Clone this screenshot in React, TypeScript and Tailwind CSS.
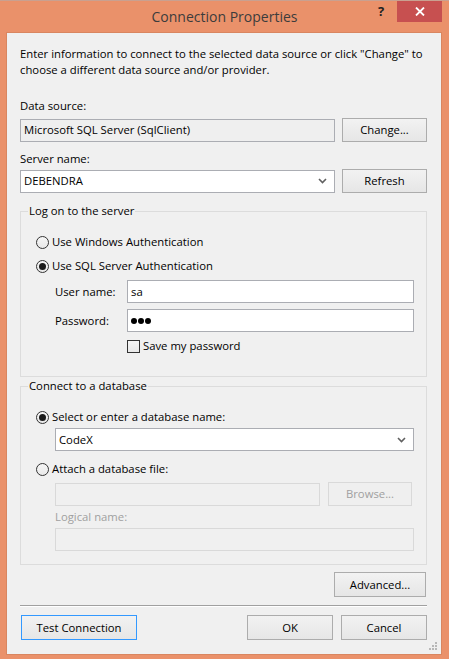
import React from "react";

const font = { fontFamily: '"Open Sans", "Noto Sans", sans-serif' };

function Chevron() {
  return (
    <svg width="9" height="6" viewBox="0 0 9 6" className="shrink-0">
      <path d="M1 1 L4.5 4.5 L8 1" fill="none" stroke="#606060" strokeWidth="1.6" />
    </svg>
  );
}

function Button({ label, className = "", disabled = false, focused = false }: { label: string; className?: string; disabled?: boolean; focused?: boolean }) {
  return (
    <div
      className={`flex items-center justify-center border ${
        focused
          ? "border-[#3399ff] bg-gradient-to-b from-[#f2f2f2] to-[#e6e6e6] text-[#000]"
          : disabled
          ? "border-[#d9d9d9] bg-[#efefef] text-[#a0a0a0]"
          : "border-[#acacac] bg-gradient-to-b from-[#f2f2f2] to-[#e6e6e6] text-[#000]"
      } ${className}`}
    >
      {label}
    </div>
  );
}

function Radio({ checked, label }: { checked?: boolean; label: string }) {
  return (
    <div className="flex items-center h-4">
      <div className="w-[13px] h-[13px] rounded-full border border-[#333] bg-gradient-to-b from-[#f6f6f6] to-[#e9e9e9] flex items-center justify-center">
        {checked && <div className="w-[7px] h-[7px] rounded-full bg-[#1a1a1a]" />}
      </div>
      <span className="ml-[3px] text-[#000]">{label}</span>
    </div>
  );
}

function Combo({ value, className = "" }: { value: string; className?: string }) {
  return (
    <div className={`flex items-center h-[23px] bg-white border border-[#abadb3] pl-[3px] pr-[7px] ${className}`}>
      <span className="flex-1 text-[#000]">{value}</span>
      <Chevron />
    </div>
  );
}

function Group({ title, children, className = "" }: { title: string; children: React.ReactNode; className?: string }) {
  return (
    <fieldset className={`border border-[#dcdcdc] mx-0 p-0 ${className}`}>
      <legend className="ml-[7px] px-[1px] leading-4 text-[#000]">{title}</legend>
      <div className="pl-[15px] pr-[12px]">{children}</div>
    </fieldset>
  );
}

export default function App() {
  return (
    <div className="w-[449px] h-[659px] bg-[#ea916a] flex flex-col border-t border-[#c9a090]" style={font}>
      {/* Title bar */}
      <div className="relative h-[31px] shrink-0 flex items-center justify-center">
        <span className="text-[14px] text-[#3c3c3c] -mt-[1px]">Connection Properties</span>
        <span className="absolute left-[378px] top-[1px] text-[13px] font-bold text-[#222]">?</span>
        <div className="absolute left-[397px] top-0 w-[45px] h-[21px] bg-[#c75050] flex items-center justify-center">
          <svg width="10" height="9" viewBox="0 0 10 9">
            <path d="M1 0.5 L9 8.5 M9 0.5 L1 8.5" stroke="#fff" strokeWidth="1.8" />
          </svg>
        </div>
      </div>

      {/* Client area */}
      <div className="relative ml-[6px] w-[436px] h-[623px] bg-[#f0f0f0] border border-[#d98660] pl-[13px] pr-[14px] flex flex-col text-[11.3px] leading-4 text-[#000]">
        <p className="mt-[13px] -mr-[4px]">
          Enter information to connect to the selected data source or click "Change" to choose a different data source and/or provider.
        </p>

        <div className="mt-[20px]">Data source:</div>
        <div className="mt-[4px] flex items-center gap-[7px]">
          <div className="flex-1 h-[23px] flex items-center border border-[#abadb3] bg-[#efefef] px-[3px]">Microsoft SQL Server (SqlClient)</div>
          <Button label="Change..." className="w-[85px] h-[24px]" />
        </div>

        <div className="mt-[9px]">Server name:</div>
        <div className="mt-[2px] flex items-center gap-[7px]">
          <Combo value="DEBENDRA" className="flex-1" />
          <Button label="Refresh" className="w-[85px] h-[24px]" />
        </div>

        <Group title="Log on to the server" className="mt-[10px] h-[174px]">
          <div className="mt-[15px]">
            <Radio label="Use Windows Authentication" />
          </div>
          <div className="mt-[8px]">
            <Radio checked label="Use SQL Server Authentication" />
          </div>
          <div className="mt-[6px] flex items-center pl-[19px]">
            <span className="w-[72px]">User name:</span>
            <div className="flex-1 h-[23px] bg-white border border-[#abadb3] flex items-center px-[3px]">sa</div>
          </div>
          <div className="mt-[6px] flex items-center pl-[19px]">
            <span className="w-[72px]">Password:</span>
            <div className="flex-1 h-[23px] bg-white border border-[#abadb3] flex items-center px-[3px] gap-[1px]">
              <span className="w-[6px] h-[6px] rounded-full bg-black" />
              <span className="w-[6px] h-[6px] rounded-full bg-black" />
              <span className="w-[6px] h-[6px] rounded-full bg-black" />
            </div>
          </div>
          <div className="mt-[6px] flex items-center pl-[91px] h-4">
            <div className="w-[13px] h-[13px] border border-[#333] bg-gradient-to-b from-[#f6f6f6] to-[#e9e9e9]" />
            <span className="ml-[3px]">Save my password</span>
          </div>
        </Group>

        <Group title="Connect to a database" className="mt-[1px] h-[187px]">
          <div className="mt-[15px]">
            <Radio checked label="Select or enter a database name:" />
          </div>
          <Combo value="CodeX" className="mt-[3px] ml-[19px]" />
          <div className="mt-[10px]">
            <Radio label="Attach a database file:" />
          </div>
          <div className="mt-[5px] ml-[19px] flex items-center gap-[8px] pr-[2px]">
            <div className="flex-1 h-[23px] border border-[#d9d9d9] bg-[#f0f0f0]" />
            <Button label="Browse..." disabled className="w-[84px] h-[24px]" />
          </div>
          <div className="mt-[3px] ml-[19px] text-[#a0a0a0]">Logical name:</div>
          <div className="mt-[3px] ml-[19px] h-[23px] border border-[#d9d9d9] bg-[#f0f0f0]" />
        </Group>

        <div className="mt-[7px] flex justify-end pr-[1px]">
          <Button label="Advanced..." className="w-[92px] h-[25px]" />
        </div>

        <div className="mt-[8px] h-[2px] border-t border-[#a0a0a0] border-b border-b-white" />

        <div className="mt-[8px] flex items-center">
          <Button label="Test Connection" focused className="w-[116px] h-[25px] ml-[1px]" />
          <div className="flex-1" />
          <Button label="OK" className="w-[86px] h-[25px]" />
          <Button label="Cancel" className="w-[86px] h-[25px] ml-[8px]" />
        </div>

        {/* resize grip */}
        <svg width="9" height="9" viewBox="0 0 9 9" className="absolute right-[3px] bottom-[3px]">
          <rect x="6" y="0" width="2" height="2" fill="#b8b8b8" />
          <rect x="3" y="3" width="2" height="2" fill="#b8b8b8" />
          <rect x="6" y="3" width="2" height="2" fill="#b8b8b8" />
          <rect x="0" y="6" width="2" height="2" fill="#b8b8b8" />
          <rect x="3" y="6" width="2" height="2" fill="#b8b8b8" />
          <rect x="6" y="6" width="2" height="2" fill="#b8b8b8" />
        </svg>
      </div>
    </div>
  );
}
